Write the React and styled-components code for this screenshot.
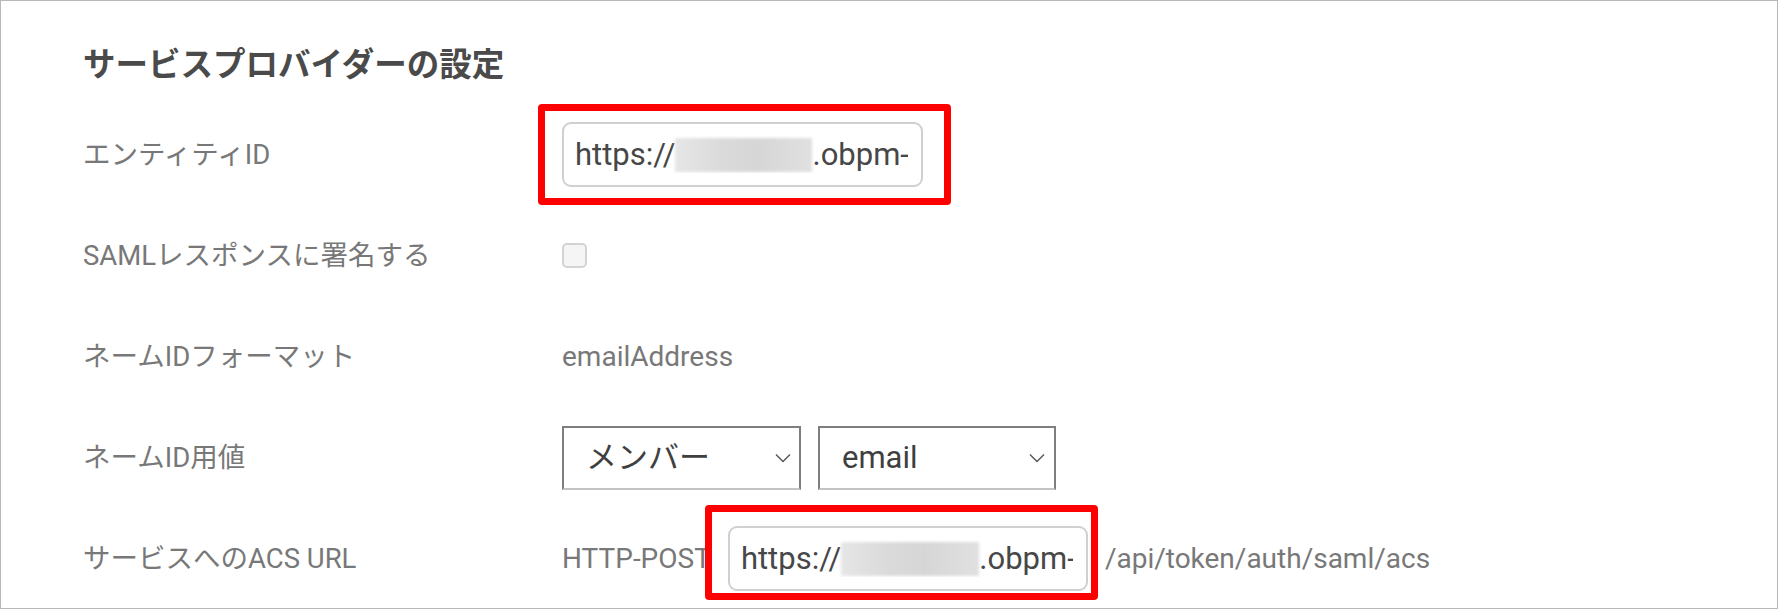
import React from "react";
import styled, { createGlobalStyle } from "styled-components";

const Global = createGlobalStyle`
  html, body { margin: 0; padding: 0; background: #fff; }
  body { font-family: Roboto, "Noto Sans CJK JP", sans-serif; }
  * { box-sizing: border-box; }
`;

const Frame = styled.div`
  width: 1778px;
  height: 609px;
  border: 1px solid #b8b8b8;
  padding: 41px 0 0 82px;
  overflow: hidden;
  background: #fff;
`;

const Title = styled.h2`
  margin: 0;
  font-family: "Noto Sans CJK JP", sans-serif;
  font-size: 32.5px;
  font-weight: 700;
  line-height: 40px;
  color: #4a4a4a;
`;

const Grid = styled.div`
  display: grid;
  grid-template-columns: 479px 1fr;
  grid-auto-rows: 101px;
  align-items: center;
  margin-top: 22px;
`;

const Label = styled.div`
  font-size: 27.5px;
  line-height: 1.2;
  color: #787878;
`;

const Value = styled.div`
  display: flex;
  align-items: center;
  gap: 17px;
  font-size: 28px;
  line-height: 1.2;
  color: #787878;
  white-space: nowrap;
`;

const TextBox = styled.div`
  position: relative;
  width: ${(p) => p.$w}px;
  height: 65px;
  border: 2px solid #d0d0d0;
  border-radius: 9px;
  padding: 0 13px 0 11px;
  display: flex;
  align-items: center;
  font-size: 31px;
  color: #474747;
  background: #fff;
  flex: none;

  &::after {
    content: "";
    position: absolute;
    top: ${(p) => p.$hl[0]}px;
    right: ${(p) => p.$hl[1]}px;
    bottom: ${(p) => p.$hl[2]}px;
    left: ${(p) => p.$hl[3]}px;
    border: 7px solid #ff0000;
    border-radius: 4px;
    pointer-events: none;
  }
`;

const Clip = styled.div`
  flex: 1;
  overflow: hidden;
  white-space: nowrap;
  display: flex;
  align-items: center;
  line-height: 1.2;
`;

const Blurred = styled.span`
  display: inline-block;
  flex: none;
  width: ${(p) => p.$w}px;
  height: 34px;
  background: linear-gradient(90deg, #e6e6e6 0%, #dadada 35%, #d6d6d6 60%, #e0e0e0 100%);
  filter: blur(1.5px);
`;

const Checkbox = styled.span`
  display: inline-block;
  width: 25px;
  height: 25px;
  border: 2px solid #d3d3d3;
  border-radius: 5px;
  background: #f5f5f5;
`;

const SelectBox = styled.div`
  width: ${(p) => p.$w}px;
  height: 64px;
  border: 2px solid #7e7e7e;
  border-bottom-color: #c4c4c4;
  padding: 0 ${(p) => p.$pr}px 0 22px;
  display: flex;
  align-items: center;
  justify-content: space-between;
  font-size: 31px;
  color: #3f3f3f;
  background: #fff;
  flex: none;
`;

const Chevron = () => (
  <svg width="16" height="10" viewBox="0 0 16 10" fill="none">
    <path d="M1 1.5 L8 8.5 L15 1.5" stroke="#555" strokeWidth="1.4" />
  </svg>
);

const Select = ({ w, pr, children }) => (
  <SelectBox $w={w} $pr={pr} role="combobox">
    <span>{children}</span>
    <Chevron />
  </SelectBox>
);

export default function App() {
  return (
    <>
      <Global />
      <Frame>
        <Title>サービスプロバイダーの設定</Title>
        <Grid>
          <Label>エンティティID</Label>
          <Value>
            <TextBox $w={361} $hl={[-20, -30, -20, -26]}>
              <Clip>
                https://
                <Blurred $w={137} />
                .obpm-cloud.com
              </Clip>
            </TextBox>
          </Value>

          <Label>SAMLレスポンスに署名する</Label>
          <Value>
            <Checkbox />
          </Value>

          <Label>ネームIDフォーマット</Label>
          <Value>emailAddress</Value>

          <Label>ネームID用値</Label>
          <Value>
            <Select w={239} pr={8}>メンバー</Select>
            <Select w={238} pr={9}>email</Select>
          </Value>

          <Label>サービスへのACS URL</Label>
          <Value>
            <span>HTTP-POST</span>
            <TextBox $w={360} $hl={[-23, -12, -11, -25]}>
              <Clip>
                https://
                <Blurred $w={138} />
                .obpm-cloud.com
              </Clip>
            </TextBox>
            <span>/api/token/auth/saml/acs</span>
          </Value>
        </Grid>
      </Frame>
    </>
  );
}
